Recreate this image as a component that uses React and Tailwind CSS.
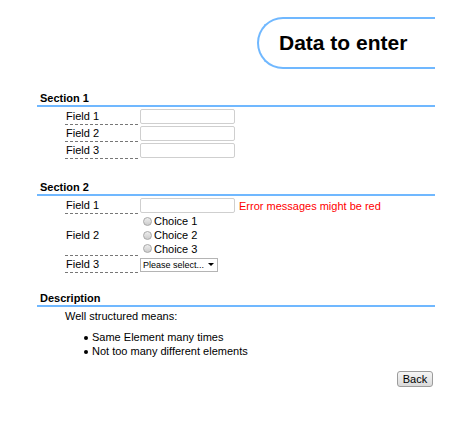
import React from 'react';

const font = { fontFamily: '"Liberation Sans", Arial, sans-serif' };

const Heading = ({ children, className = '' }) => (
  <div className={`h-[16px] pl-[3px] text-[11px] leading-[14px] font-bold border-b-2 border-[#70b8ff] ${className}`}>
    {children}
  </div>
);

const Row = ({ label, height = 'h-[17px]', children }) => (
  <div className={`flex ${height}`}>
    <div className="ml-[28px] w-[73px] shrink-0 pl-[1px] flex items-center border-b border-dashed border-[#777]">
      {label}
    </div>
    <div className="ml-[2px] flex items-center">{children}</div>
  </div>
);

const TextBox = () => (
  <span className="block h-[15px] w-[95px] border border-[#cfcfcf] rounded-[2px] bg-white" />
);

const Radio = ({ label }) => (
  <label className="flex items-center h-[13.7px]">
    <span className="ml-[3px] w-[9px] h-[9px] rounded-full border border-[#a8a8a8] bg-gradient-to-b from-[#eeeeee] to-[#cccccc]" />
    <span className="ml-[2px]">{label}</span>
  </label>
);

const Bullet = ({ children }) => (
  <li className="flex items-center">
    <span className="ml-[47px] w-[4px] h-[4px] rounded-full bg-black" />
    <span className="ml-[4px]">{children}</span>
  </li>
);

const App = () => {
  return (
    <div className="w-[472px] h-[421px] bg-white text-black text-[11px] leading-[14px]" style={font}>
      <div className="mx-[37px] pt-[17px]">
        <div className="flex justify-end">
          <div className="h-[52px] w-[178px] flex items-center pl-[20px] border-y-2 border-l-2 border-[#70b8ff] rounded-l-[26px] text-[21px] font-bold">
            Data to enter
          </div>
        </div>

        <Heading className="mt-[22px]">Section 1</Heading>
        <div className="mt-[1px]">
          <Row label="Field 1"><TextBox /></Row>
          <Row label="Field 2"><TextBox /></Row>
          <Row label="Field 3"><TextBox /></Row>
        </div>

        <Heading className="mt-[21px]">Section 2</Heading>
        <div className="mt-[1px]">
          <Row label="Field 1">
            <TextBox />
            <span className="ml-[4px] text-[#ff0000] whitespace-nowrap">Error messages might be red</span>
          </Row>
          <Row label="Field 2" height="h-[42px]">
            <div className="flex flex-col">
              <Radio label="Choice 1" />
              <Radio label="Choice 2" />
              <Radio label="Choice 3" />
            </div>
          </Row>
          <Row label="Field 3">
            <span className="flex items-center h-[14px] w-[78px] pl-[2px] border border-[#b4b4b4] bg-white text-[9px] whitespace-nowrap">
              <span>Please select...</span>
              <span className="ml-auto mr-[3px] shrink-0 w-0 h-0 border-x-[3px] border-x-transparent border-t-[3px] border-t-black" />
            </span>
          </Row>
        </div>

        <Heading className="mt-[18px]">Description</Heading>
        <p className="mt-[2px] pl-[28px]">Well structured means:</p>
        <ul className="mt-[8px] leading-[13.7px]">
          <Bullet>Same Element many times</Bullet>
          <Bullet>Not too many different elements</Bullet>
        </ul>
        <div className="mt-[13px] flex justify-end pr-[2px]">
          <button className="h-[16px] w-[36px] text-[11px] leading-none border border-[#9c9c9c] rounded-[3px] bg-gradient-to-b from-[#f6f6f6] to-[#dadada]">
            Back
          </button>
        </div>
      </div>
    </div>
  );
};

export default App;
